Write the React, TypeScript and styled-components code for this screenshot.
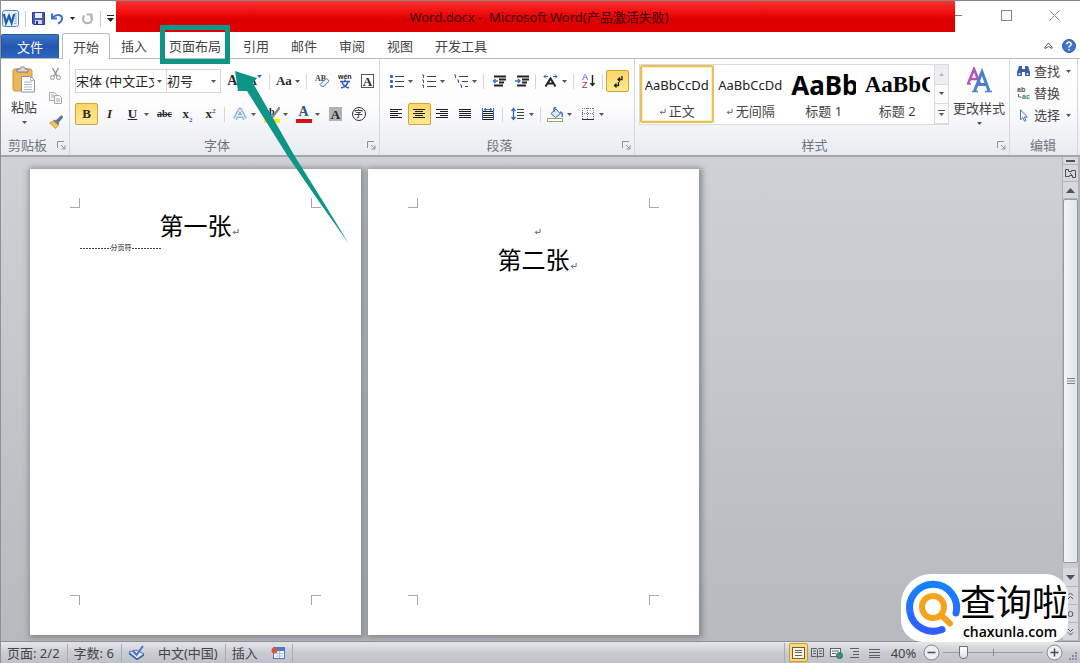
import React, { useState } from "react";
import styled, { createGlobalStyle, css } from "styled-components";

const sans = '"Noto Sans", "Noto Sans CJK SC", sans-serif';
const serif = '"Liberation Serif", "Noto Sans CJK SC", serif';
const teal = "#0f9488";

const GlobalStyle = createGlobalStyle`
  * { box-sizing: border-box; }
  body { margin: 0; font-family: ${sans}; font-size: 13px; color: #444; background: #fff; }
  button, select, input { font: inherit; color: inherit; margin: 0; }
  button { border: 0; padding: 0; background: none; }
  svg { display: block; flex: none; }
`;

const Window = styled.div`
  display: flex;
  flex-direction: column;
  min-height: 100vh;
  border-left: 1px solid #8d9197;
  background: #fff;
`;

/* ---------- title bar ---------- */

const TitleBar = styled.header`
  display: flex;
  height: 33px;
  border-top: 1px solid #8c8585;
`;

const QuickAccess = styled.div`
  display: flex;
  align-items: center;
  gap: 6px;
  width: 115px;
  padding: 3px 0 0 1px;
`;

const QuickButton = styled.button`
  display: flex;
  align-items: center;
  gap: 6px;
`;

const QuickDivider = styled.span`
  width: 1px;
  height: 16px;
  background: #c9cbcf;
`;

const Banner = styled.h1`
  flex: 1;
  height: 31px;
  margin: 0;
  padding-left: 7px;
  line-height: 32px;
  font-size: 13px;
  font-weight: 400;
  text-align: center;
  white-space: pre;
  color: #3d0505;
  background: linear-gradient(#f93030, #ee0808 45%, #dc0000 60%, #e00000);
`;

const WindowControls = styled.div`
  display: flex;
  justify-content: space-between;
  width: 125px;
  padding: 9px 20px 0 0;
  align-items: flex-start;
`;

/* ---------- tabs ---------- */

const TabBar = styled.nav`
  display: flex;
  height: 26px;
  border-bottom: 1px solid #b9bcc1;
`;

const FileTab = styled.button`
  width: 58px;
  margin-right: 3px;
  margin-top: 1px;
  line-height: 20px;
  color: #fff;
  border-radius: 2px 2px 0 0;
  border: 1px solid #2455a0;
  border-bottom: 0;
  background: linear-gradient(#3c74c8, #2358b0 50%, #2d66bf);
`;

const Tab = styled.button<{ $active?: boolean }>`
  position: relative;
  padding: 0 11px;
  line-height: 24px;
  white-space: nowrap;
  ${(p) =>
    p.$active &&
    css`
      height: 26px;
      padding: 0 10px;
      line-height: 22px;
      border: 1px solid #b9bcc1;
      border-bottom: 0;
      border-radius: 3px 3px 0 0;
      background: #fff;
    `}
`;

const TabTools = styled.div`
  display: flex;
  align-items: center;
  gap: 9px;
  margin-left: auto;
  padding-right: 4px;
`;

const Highlight = styled.span`
  position: absolute;
  z-index: 2;
  inset: -8px 2px -6px 2px;
  border: 5px solid ${teal};
`;

const Pointer = styled.svg`
  position: absolute;
  z-index: 3;
  left: 75px;
  top: 38px;
  pointer-events: none;
`;

/* ---------- ribbon ---------- */

const Ribbon = styled.div`
  display: flex;
  height: 98px;
  padding-right: 2px;
  border-bottom: 2px solid #a3a6ab;
  background: linear-gradient(#fff, #fcfcfd 50%, #e7eaef);
`;

const Group = styled.section<{ $width?: number }>`
  display: flex;
  flex-direction: column;
  ${(p) => (p.$width ? css`width: ${p.$width}px; flex: none;` : css`flex: 1;`)}
  border-right: 1px solid #d5d7db;
`;

const GroupRows = styled.div`
  display: flex;
  flex-direction: column;
  flex: 1;
  gap: 9px;
  padding: 10px 0 0 5px;
`;

const GroupPanel = styled.div`
  display: flex;
  flex: 1;
  padding: 5px 0 0 4px;
`;

const ToolRow = styled.div`
  display: flex;
  align-items: center;
  height: 24px;
`;

const GroupLabel = styled.footer`
  display: flex;
  align-items: center;
  height: 20px;
  padding-right: 1px;
  color: #70747c;
  line-height: 18px;

  span { flex: 1; text-align: center; }
`;

const Launcher = styled.button`
  width: 14px;
  height: 14px;
  display: grid;
  place-items: center;
`;

const Tool = styled.button<{ $on?: boolean; $split?: boolean }>`
  display: flex;
  align-items: center;
  width: ${(p) => (p.$split ? 32 : 23)}px;
  height: 22px;
  padding-right: ${(p) => (p.$split ? 4 : 0)}px;
  border-radius: 2px;
  ${(p) =>
    p.$on &&
    css`
      border: 1px solid #d2a23b;
      background: linear-gradient(#fbd568, #ffe07a 50%, #ffe995);
    `}
`;

const ToolFace = styled.span`
  display: flex;
  justify-content: center;
  align-items: center;
  flex: 1;
`;

const Divider = styled.span`
  width: 1px;
  height: 15px;
  margin: 0 3px 0 2px;
  background: #d4d6da;
`;

const Letter = styled.span<{ $size?: number; $italic?: boolean; $line?: string; $color?: string }>`
  font-family: ${serif};
  font-weight: 700;
  font-size: ${(p) => p.$size ?? 13}px;
  line-height: 16px;
  font-style: ${(p) => (p.$italic ? "italic" : "normal")};
  text-decoration: ${(p) => p.$line ?? "none"};
  color: ${(p) => p.$color ?? "#2b2b2b"};

  sub, sup { font-size: 7px; line-height: 0; color: #2a5fb0; }
`;

const BoxedLetter = styled(Letter)<{ $fill?: string }>`
  width: 13px;
  height: 14px;
  line-height: 13px;
  text-align: center;
  background: ${(p) => p.$fill ?? "#fff"};
  border: 1px solid ${(p) => p.$fill ?? "#555"};
`;

const RingLetter = styled.span`
  width: 14px;
  height: 14px;
  border: 1px solid #333;
  border-radius: 50%;
  font-size: 9px;
  line-height: 11px;
  text-align: center;
  color: #222;
`;

const Underbar = styled.span<{ $color: string }>`
  display: grid;
  justify-items: center;
  width: 16px;
  height: 17px;
  border-bottom: 4px solid ${(p) => p.$color};
  line-height: 12px;

  ${Letter} { line-height: 12px; }
`;

const Combo = styled.label<{ $width: number }>`
  display: flex;
  align-items: center;
  width: ${(p) => p.$width}px;
  height: 24px;
  padding-right: 4px;
  border: 1px solid #d4d6da;
  background: #fff;

  & + & { border-left: 0; }

  select {
    flex: 1;
    min-width: 0;
    height: 20px;
    margin-right: 3px;
    padding: 0;
    border: 0;
    appearance: none;
    background: none;
    color: #222;
    overflow: hidden;
    text-overflow: clip;
  }
`;

const PasteButton = styled.button`
  display: flex;
  flex-direction: column;
  align-items: center;
  width: 38px;
  padding-top: 2px;
  line-height: 18px;
  gap: 5px;
`;

const SmallColumn = styled.div`
  display: flex;
  flex-direction: column;
  gap: 10px;
  padding: 3px 0 0 6px;
`;

const Gallery = styled.div`
  display: flex;
  flex: 1;
  height: 61px;
  border: 1px solid #d9dbdf;
  background: #fff;
`;

const StyleCard = styled.button<{ $on?: boolean }>`
  display: flex;
  flex-direction: column;
  align-items: center;
  flex: 1;
  min-width: 0;
  height: 58px;
  padding-top: 1px;
  border: 2px solid transparent;
  border-radius: 2px;
  ${(p) => p.$on && css`border-color: #e9c05a; box-shadow: inset 0 0 0 1px #fff0b5;`}
`;

const Sample = styled.span<{ $size: number; $face?: string; $bold?: boolean }>`
  display: block;
  max-width: 65px;
  height: 34px;
  line-height: 34px;
  overflow: hidden;
  white-space: nowrap;
  font-family: ${(p) => p.$face ?? sans};
  font-size: ${(p) => p.$size}px;
  font-weight: ${(p) => (p.$bold ? 700 : 400)};
  color: ${(p) => (p.$bold ? "#000" : "#222")};
`;

const StyleName = styled.span`
  display: flex;
  align-items: center;
  gap: 3px;
  line-height: 18px;
  white-space: nowrap;
`;

const GalleryScroll = styled.div`
  display: grid;
  grid-template-rows: repeat(3, 1fr);
  width: 14px;

  button {
    display: grid;
    place-items: center;
    border-left: 1px solid #d9dbdf;
    border-bottom: 1px solid #d9dbdf;
    background: #fbfbfc;
  }
  button:first-child { background: #eceef1; }
`;

const ChangeStyles = styled.button`
  display: flex;
  flex-direction: column;
  align-items: center;
  gap: 5px;
  width: 60px;
  padding-top: 3px;
  line-height: 18px;
  white-space: nowrap;
`;

const EditList = styled.div`
  display: flex;
  flex-direction: column;
  flex: 1;
  padding: 1px 6px 0 7px;
`;

const EditButton = styled.button`
  display: flex;
  align-items: center;
  gap: 4px;
  height: 22px;
  line-height: 18px;

  span { flex: 1; text-align: left; }
`;

/* ---------- workspace ---------- */

const Workspace = styled.main`
  position: relative;
  display: flex;
  flex: 1;
  background: linear-gradient(#ced1d5, #b6babf);
`;

const Pages = styled.div`
  display: flex;
  flex: 1;
  gap: 7px;
  padding: 12px 0 6px 29px;
`;

const Paper = styled.article`
  display: flex;
  flex-direction: column;
  width: 331px;
  padding: 29px 40px 30px;
  background: #fff;
  box-shadow: 1px 1px 6px 2px #85898f;
`;

const MarkRow = styled.div`
  display: flex;
  justify-content: space-between;
`;

const CornerMark = styled.span<{ $v: "top" | "bottom"; $h: "left" | "right" }>`
  width: 10px;
  height: 10px;
  border: 0 solid #a9a9a9;
  border-${(p) => p.$v}-width: 1px;
  border-${(p) => p.$h}-width: 1px;
`;

const PaperBody = styled.div`
  flex: 1;
  padding: 2px 10px 0;
`;

const Line = styled.p`
  display: flex;
  justify-content: center;
  align-items: center;
  height: 34px;
  margin: 0;
  font-size: 24px;
  line-height: 34px;
  font-family: ${serif};
  color: #000;

  svg { margin: 8px -7px 0 0; }
`;

const PageBreak = styled.p`
  display: flex;
  align-items: center;
  width: 82px;
  height: 8px;
  margin: 0;
  font-size: 7px;
  line-height: 8px;
  color: #111;
  white-space: nowrap;

  &::before, &::after {
    content: "";
    flex: 1;
    height: 1px;
    background: repeating-linear-gradient(90deg, #444 0 2px, #fff 2px 3px);
  }
`;

const ScrollColumn = styled.div`
  display: flex;
  flex-direction: column;
  width: 18px;
  border-right: 2px solid #b0b3b8;
  border-left: 1px solid #b3b7bd;
  background: #c9ccd2;
`;

const ScrollButton = styled.button<{ $height: number }>`
  display: grid;
  place-items: center;
  height: ${(p) => p.$height}px;
  border-bottom: 1px solid #b3b7bd;
  background: #d5d8dd;
`;

const ScrollThumb = styled.div`
  display: grid;
  place-items: center;
  flex: 1;
  margin-bottom: 5px;
  border: 1px solid #9599a0;
  border-radius: 2px;
  background: linear-gradient(90deg, #f4f6fa, #dfe3ec);
`;

const Watermark = styled.aside`
  position: absolute;
  z-index: 4;
  right: 12px;
  bottom: -1px;
  display: flex;
  align-items: center;
  width: 167px;
  height: 68px;
  padding-left: 4px;
  border-radius: 30px 22px 18px 22px;
  background: #fff;
  color: #000;

  div { display: flex; flex-direction: column; align-items: center; padding-top: 5px; margin-left: -1px; }
  strong { font-size: 36px; line-height: 43px; font-weight: 400; white-space: nowrap; }
  span { font: 600 14px/16px "Open Sans", sans-serif; margin-right: 8px; }
`;

/* ---------- status bar ---------- */

const StatusBar = styled.footer`
  display: flex;
  align-items: center;
  height: 22px;
  padding-right: 1px;
  border-top: 1px solid #8f9398;
  background: linear-gradient(#e6e8ec, #c9ccd2 50%, #bfc2c8);
`;

const StatusItem = styled.button`
  display: flex;
  align-items: center;
  gap: 13px;
  height: 18px;
  padding: 0 7px 0 6px;
  border-right: 1px solid #a9adb3;
  line-height: 16px;
  white-space: nowrap;
`;

const ViewButtons = styled.div`
  display: flex;
  margin-left: auto;
  padding-left: 4px;
  border-left: 1px solid #a9adb3;
`;

const ViewButton = styled.button<{ $on?: boolean }>`
  display: grid;
  place-items: center;
  width: 19px;
  height: 19px;
  ${(p) => p.$on && css`border: 1px solid #c99a32; border-radius: 2px; background: #ffdc73;`}
`;

const ZoomValue = styled.button`
  width: 39px;
  line-height: 16px;
`;

const Zoom = styled.input`
  width: 100px;
  height: 18px;
  margin: 0 3px;
  appearance: none;
  background:
    linear-gradient(#8a8e94, #8a8e94) center / 1px 7px no-repeat,
    linear-gradient(#9a9ea4, #9a9ea4) center / 100% 1px no-repeat;

  &::-webkit-slider-thumb {
    appearance: none;
    width: 9px;
    height: 13px;
    border: 1px solid #6f7378;
    border-radius: 1px 1px 5px 5px;
    background: linear-gradient(#fff, #dfe1e5);
  }
`;

/* ---------- drawings ---------- */

const Down = ({ color = "#555" }: { color?: string }) => (
  <svg width="5" height="3" viewBox="0 0 5 3"><path d="M0 0h5L2.500 3z" fill={color} /></svg>
);

const Return = ({ size = 7, color = "#555" }: { size?: number; color?: string }) => (
  <svg width={size} height={size} viewBox="0 0 8 8" fill="none" stroke={color}>
    <path d="M7 1v4H1.500M3.500 3l-2 2 2 2" />
  </svg>
);

const DialogMark = () => (
  <svg width="9" height="9" viewBox="0 0 9 9" fill="none" stroke="#8c9096">
    <path d="M.5 7V.5H7M4 4l3.500 3.500M8 4.500V8H4.500" />
  </svg>
);

const WordIcon = () => (
  <svg width="17" height="17" viewBox="0 0 17 17">
    <rect x=".5" y=".5" width="16" height="16" rx="2" fill="#e6f1fc" stroke="#5287c6" />
    <path d="M12.500 3.500h2M12.500 6h2M12.500 8.500h2M12.500 11h2M12.500 13.500h2" stroke="#6f9fd8" />
    <path d="M1.800 4l2.200 9L7 6l2.600 7L12.200 4" fill="none" stroke="#1f5bb0" strokeWidth="2.200" />
  </svg>
);

const SaveIcon = () => (
  <svg width="13" height="13" viewBox="0 0 13 13">
    <path d="M.5.500h12v12h-11l-1-1z" fill="#4a55b5" stroke="#2f3a94" />
    <rect x="3" y="1" width="7" height="5" fill="#e9eefb" />
    <rect x="3" y="8" width="7" height="4" fill="#cdd4ee" /><rect x="4" y="9" width="2" height="3" fill="#2b3480" />
  </svg>
);

const UndoIcon = () => (
  <svg width="13" height="13" viewBox="0 0 13 13" fill="none" stroke="#3c73c4" strokeWidth="2">
    <path d="M2 5.500C5 2 11 2 11 6.500c0 2.500-2 4-4 5" /><path d="M1 1.500v5h5" />
  </svg>
);

const RedoIcon = () => (
  <svg width="13" height="13" viewBox="0 0 13 13" fill="none" stroke="#b0b3b7" strokeWidth="2">
    <path d="M9.500 3.500a4.500 4.500 0 1 1-6 0" /><path d="M5.500 2.500h5v4" />
  </svg>
);

const PasteIcon = () => (
  <svg width="24" height="27" viewBox="0 0 24 27">
    <rect x="1" y="3" width="19" height="22" rx="2" fill="#efb654" stroke="#d0913a" />
    <path d="M5 6V3h3c0-3 5-3 5 0h3v3z" fill="#d9dade" stroke="#77797e" />
    <path d="M9.500 10.500h9l4 4v11.500h-13z" fill="#fff" stroke="#8794ab" />
    <path d="M18.500 10.500v4h4M12 16h8M12 18.500h8M12 21h8M12 23.500h8" fill="none" stroke="#a9bbd6" />
  </svg>
);

const CutIcon = () => (
  <svg width="13" height="14" viewBox="0 0 13 14" fill="none" stroke="#8f9399">
    <path d="M3.500 1l4.500 8M9.500 1L5 9" strokeWidth="1.400" />
    <circle cx="3.500" cy="10.500" r="2" /><circle cx="9.500" cy="10.500" r="2" />
  </svg>
);

const CopyIcon = () => (
  <svg width="13" height="14" viewBox="0 0 13 14" fill="#fafafa" stroke="#a5a8ad">
    <path d="M.5 1.500h5l2 2v6h-7z" /><path d="M5.500 4.500h5l2 2v6h-7z" /><path d="M7 8h4M7 10h4M2 4h3M2 6h3" />
  </svg>
);

const BrushIcon = () => (
  <svg width="14" height="14" viewBox="0 0 14 14">
    <path d="M12.500.500L14 2 9.500 7.500 7 5.500z" fill="#5a6fa8" stroke="#48527a" strokeWidth=".5" />
    <path d="M5.500 4.500l5 4-1 1.500-5.500-4z" fill="#777" />
    <path d="M4 6l5.500 4-3 3.500L.5 8z" fill="#edc45d" stroke="#b98b2c" strokeWidth=".7" />
  </svg>
);

const EraserIcon = () => (
  <svg width="16" height="16" viewBox="0 0 16 16">
    <text x="1" y="8" fontSize="8" fontWeight="700" fontFamily="Liberation Serif" fill="#444">AB</text>
    <path d="M6 11.500l5-5c1-1 2-1 3 0s.8 2 0 2.800l-4 4H7.500z" fill="#edf2fb" stroke="#5272ac" />
  </svg>
);

const PhoneticIcon = () => (
  <svg width="16" height="16" viewBox="0 0 16 16">
    <text x="1" y="6" fontSize="7" fontWeight="700" fontFamily="Liberation Sans" fill="#222">wén</text>
    <path d="M3 8.500h10M8 6.500v2M5 9c1 3 3 5 7 6M11 9c-1 3-3 5-7 6" fill="none" stroke="#2f5fb3" strokeWidth="1.500" />
  </svg>
);

const OutlineA = () => (
  <svg width="14" height="14" viewBox="0 0 14 14" fill="none" strokeLinejoin="round">
    <path d="M2 12L7 2.500 12 12M4.500 9h5" stroke="#84b4e3" strokeWidth="4" />
    <path d="M2 12L7 2.500 12 12M4.500 9h5" stroke="#e3f0fc" strokeWidth="1.500" />
  </svg>
);

const PenMark = () => (
  <svg width="16" height="13" viewBox="0 0 16 13">
    <text x="0" y="9" fontSize="10" fontWeight="700" fontFamily="Liberation Serif" fill="#222">ab</text>
    <path d="M15 1L8.500 10l-1 2 2-1L16 2.500z" fill="#999" stroke="#555" strokeWidth=".6" />
  </svg>
);

type ListKind = "bullet" | "number" | "level";
const ListIcon = ({ kind }: { kind: ListKind }) => (
  <svg width="14" height="14" viewBox="0 0 14 14">
    {[0, 1, 2].map((i) => {
      const shift = kind === "level" ? i * 3 : 0;
      return (
        <g key={i}>
          <rect x={5 + shift} y={2 + i * 5} width={9 - shift} height="1" fill="#444" />
          {kind === "bullet" ? (
            <rect x="0" y={1 + i * 5} width="3" height="3" rx="1" fill="#3464ad" />
          ) : (
            <path d={`M${shift} ${1 + i * 5}h1.500v3`} fill="none" stroke="#3464ad" />
          )}
        </g>
      );
    })}
  </svg>
);

const IndentIcon = ({ out }: { out?: boolean }) => (
  <svg width="14" height="13" viewBox="0 0 14 13">
    <path d="M2 1.500h12M7 4.500h7M7 7.500h5M2 10.500h9" stroke="#222" strokeWidth="2" />
    <path d={out ? "M6 6H1.500M3.500 4l-2 2 2 2" : "M0 6h4.500M3 4l2 2-2 2"} stroke="#3b70c0" fill="none" strokeWidth="1.400" />
  </svg>
);

type AlignKind = "left" | "center" | "right" | "full" | "spread";
const AlignIcon = ({ kind }: { kind: AlignKind }) => {
  const rows = kind === "spread" ? [3, 5, 7, 9, 11] : [1, 3, 5, 7, 9];
  return (
    <svg width="13" height="12" viewBox="0 0 13 12">
      {rows.map((y, i) => {
        const w = kind === "full" || kind === "spread" || i % 2 === 0 ? 12 : 8;
        const x = kind === "right" ? 12 - w : kind === "center" ? (12 - w) / 2 : 0;
        return <rect key={y} x={x} y={y} width={w} height="1" fill="#1d1d1d" />;
      })}
      {kind === "spread" && <path d="M.5 0v12M11.500 0v12M2 1.500h8M4 0L2 1.500 4 3M8 0l2 1.500L8 3" fill="none" stroke="#3668b5" />}
    </svg>
  );
};

const ScaleIcon = () => (
  <svg width="15" height="14" viewBox="0 0 15 14" fill="none">
    <path d="M2.500 12.500l5-8 5 8M4.500 9.500h6" stroke="#222" strokeWidth="2" />
    <path d="M1 2.500h4M10 2.500h4M3 .5l-2 2 2 2M12 .5l2 2-2 2" stroke="#2f62b3" />
  </svg>
);

const SortIcon = () => (
  <svg width="14" height="16" viewBox="0 0 14 16">
    <text x="0" y="7" fontSize="9" fontFamily="Liberation Sans" fill="#2f62b3">A</text>
    <text x="0" y="15" fontSize="9" fontFamily="Liberation Sans" fill="#a13c4c">Z</text>
    <path d="M10.500 2v10M8.500 10l2 2.500 2-2.500" fill="none" stroke="#222" strokeWidth="1.400" />
  </svg>
);

const MarksIcon = () => (
  <svg width="14" height="14" viewBox="0 0 14 14" fill="none" stroke="#222" strokeWidth="1.300">
    <path d="M11 2v3.500H7M9 3.500l-2 2 2 2M7.500 8v3.500h-4M5.500 9.500l-2 2 2 2" />
  </svg>
);

const SpacingIcon = () => (
  <svg width="13" height="14" viewBox="0 0 13 14" fill="none">
    <path d="M6 2.500h7M6 5.500h7M6 8.500h7M6 11.500h7" stroke="#444" />
    <path d="M2.500 1.500v11M.5 4l2-2.500 2 2.500M.5 10l2 2.500 2-2.500" stroke="#3568b5" strokeWidth="1.300" />
  </svg>
);

const BucketIcon = () => (
  <svg width="17" height="15" viewBox="0 0 17 15">
    <path d="M4 6.500L9 2l4.500 5-5 3.500z" fill="#dbe8f8" stroke="#3f659f" />
    <path d="M7 5V1.500c0-1 2-1 2 0M13 5c2 0 3 2 2 5" fill="none" stroke="#3b6fc0" strokeWidth="1.400" />
    <rect x=".5" y="11.500" width="15" height="3" fill="#fff" stroke="#9aa36b" />
  </svg>
);

const BorderIcon = () => (
  <svg width="12" height="12" viewBox="0 0 12 12" fill="none" stroke="#777">
    <path d="M.5 0v11M11.500 0v11M5.500 0v11M0 .5h12M0 5.500h12" strokeDasharray="1 1" /><path d="M0 11.500h12" stroke="#333" />
  </svg>
);

const StylesIcon = () => (
  <svg width="26" height="27" viewBox="0 0 26 27" fill="none">
    <path d="M2 17L8 2l6 15M4.500 12h7" stroke="#b557b5" strokeWidth="2.600" />
    <path d="M1 17h4M11 17h4" stroke="#b557b5" strokeWidth="1.500" />
    <path d="M8.500 24L16 5l7 19M11.500 17.500h9" stroke="#4a80cc" strokeWidth="3" />
    <path d="M6 24.500h6M19 24.500h7" stroke="#4a80cc" strokeWidth="1.500" />
  </svg>
);

const FindIcon = () => (
  <svg width="13" height="12" viewBox="0 0 13 12" fill="#3d5f9e">
    <path d="M2 1h3v3h3V1h3l2 6v4H8V7H5v4H0V7z" /><path d="M1.500 8h2v2h-2zM9.500 8h2v2h-2z" fill="#bfd0ee" />
  </svg>
);

const ReplaceIcon = () => (
  <svg width="13" height="14" viewBox="0 0 13 14" fontFamily="Liberation Sans" fontSize="7" fontWeight="700">
    <text x="0" y="6" fill="#555">ab</text><text x="5" y="13" fill="#2f8a4d">ac</text>
    <path d="M1.500 8v3h3" fill="none" stroke="#3568b5" />
  </svg>
);

const SelectIcon = () => (
  <svg width="13" height="13" viewBox="0 0 13 13">
    <path d="M3.500.800v10l2.300-2.300 1.700 3.700 1.500-.7L7.300 8h3z" fill="#fff" stroke="#5272ac" />
  </svg>
);

const HelpIcon = () => (
  <svg width="14" height="14" viewBox="0 0 14 14">
    <circle cx="7" cy="7" r="6.500" fill="#3f74cc" stroke="#2b579f" />
    <path d="M4.800 5.300c0-3 4.600-2.800 4.400 0C9.100 6.800 7 6.800 7 8.500M7 10v1.500" fill="none" stroke="#fff" strokeWidth="1.500" />
  </svg>
);

const ProofIcon = () => (
  <svg width="17" height="15" viewBox="0 0 17 15">
    <path d="M1 7l7-2 8 4-7 5z" fill="#dfe7f5" stroke="#4e6fb0" /><path d="M1 8.500l8 6 7-4.500" fill="none" stroke="#3b61a8" strokeWidth="1.400" />
    <path d="M5 6l3.500 4L15 1" fill="none" stroke="#4a74c8" strokeWidth="2" />
  </svg>
);

const MacroIcon = () => (
  <svg width="14" height="12" viewBox="0 0 14 12">
    <rect x="2.500" y=".5" width="11" height="11" fill="#eef4fd" stroke="#5678b3" /><rect x="3" y="1" width="10" height="3" fill="#4a7cc9" />
    <path d="M5 6.500h7M5 9h7M8.500 4v7" stroke="#a9bfe0" /><circle cx="3.500" cy="3.500" r="3" fill="#d9553a" />
  </svg>
);

type ViewKind = "print" | "read" | "web" | "outline" | "draft";
const ViewIcon = ({ kind }: { kind: ViewKind }) => (
  <svg width="13" height="12" viewBox="0 0 13 12" fill="none" stroke="#5d6167">
    {kind === "print" && <><rect x=".5" y=".5" width="12" height="11" fill="#fff8dc" /><path d="M3 3.500h7M3 5.500h7M3 8.500h7" /></>}
    {kind === "read" && <path d="M.5 1.500h5l1 1 1-1h5v8h-5l-1 1-1-1h-5zM6.500 2.500v8M2 4h3M2 6.500h3M8 4h3M8 6.500h3" />}
    {kind === "web" && <><rect x=".5" y="1.500" width="10" height="8" fill="#f4f6f8" /><path d="M2 4h7M2 6.500h4" /><circle cx="9.500" cy="8.500" r="3" fill="#3f8d7c" stroke="#2f6e78" /></>}
    {kind === "outline" && <path d="M1 1.500h9M4 4.500h6M4 7.500h6M1 10.500h9" />}
    {kind === "draft" && <path d="M1 2.500h11M1 5.500h11M1 8.500h11M1 10.500h11" />}
  </svg>
);

const RoundSign = ({ plus }: { plus?: boolean }) => (
  <svg width="17" height="17" viewBox="0 0 17 17">
    <circle cx="8.500" cy="8.500" r="7.500" fill="#eceef1" stroke="#83878d" />
    <path d={plus ? "M4.500 8.500h8M8.500 4.500v8" : "M4.500 8.500h8"} stroke="#4b4f55" strokeWidth="1.500" />
  </svg>
);

const Triangle = ({ flip }: { flip?: boolean }) => (
  <svg width="9" height="5" viewBox="0 0 9 5"><path d={flip ? "M0 0h9L4.500 5z" : "M0 5h9L4.500 0z"} fill="#4d5258" /></svg>
);

const JumpIcon = ({ kind }: { kind: "prev" | "dot" | "next" }) => (
  <svg width="7" height="8" viewBox="0 0 7 8" fill="none" stroke="#4d5258">
    {kind === "prev" && <path d="M1 3.500L3.500 1 6 3.500M1 7l2.500-2.500L6 7" />}
    {kind === "dot" && <circle cx="3.500" cy="4" r="2.500" />}
    {kind === "next" && <path d="M1 1l2.500 2.500L6 1M1 4.500L3.500 7 6 4.500" />}
  </svg>
);

const LogoIcon = () => (
  <svg width="56" height="58" viewBox="0 0 56 58" fill="none" strokeLinecap="round">
    <defs>
      <linearGradient id="ring" x1="0" y1="0" x2="0" y2="1">
        <stop offset="0" stopColor="#1583ff" /><stop offset="1" stopColor="#2f5dff" />
      </linearGradient>
    </defs>
    <path d="M37 50.500A23.500 23.500 0 1 1 51 34" stroke="url(#ring)" strokeWidth="7" />
    <circle cx="28" cy="28" r="11" stroke="#f5a21d" strokeWidth="6" />
    <path d="M37 37l8 7.500" stroke="#f5a21d" strokeWidth="6" />
  </svg>
);

/* ---------- composed parts ---------- */

type ToolButtonProps = { label: string; on?: boolean; split?: boolean; children: React.ReactNode };
const ToolButton = ({ label, on, split, children }: ToolButtonProps) => (
  <Tool aria-label={label} $on={on} $split={split}>
    <ToolFace>{children}</ToolFace>
    {split && <Down />}
  </Tool>
);

const Footer = ({ title, launcher = true }: { title: string; launcher?: boolean }) => (
  <GroupLabel>
    <span>{title}</span>
    {launcher && <Launcher aria-label={`${title}对话框`}><DialogMark /></Launcher>}
  </GroupLabel>
);

const Marks = ({ edge }: { edge: "top" | "bottom" }) => {
  const side = edge === "top" ? "bottom" : "top";
  return (
    <MarkRow>
      <CornerMark $v={side} $h="right" />
      <CornerMark $v={side} $h="left" />
    </MarkRow>
  );
};

const tabsAfter = ["引用", "邮件", "审阅", "视图", "开发工具"];
const views: ViewKind[] = ["print", "read", "web", "outline", "draft"];
const aligns: AlignKind[] = ["left", "center", "right", "full", "spread"];

export default function App() {
  const [zoom, setZoom] = useState(18);

  return (
    <Window>
      <GlobalStyle />
      <TitleBar>
        <QuickAccess>
          <WordIcon />
          <QuickDivider />
          <QuickButton aria-label="保存"><SaveIcon /></QuickButton>
          <QuickButton aria-label="撤消"><UndoIcon /><Down color="#222" /></QuickButton>
          <QuickButton aria-label="重复"><RedoIcon /></QuickButton>
          <QuickDivider />
          <QuickButton aria-label="自定义">
            <svg width="7" height="7" viewBox="0 0 7 7"><path d="M0 .5h7" stroke="#222" /><path d="M0 3h7L3.500 7z" fill="#222" /></svg>
          </QuickButton>
        </QuickAccess>
        <Banner>{"Word.docx -  Microsoft Word(产品激活失败)"}</Banner>
        <WindowControls>
          <button aria-label="最小化"><svg width="8" height="11" viewBox="0 0 8 11"><path d="M0 5.500h7" stroke="#777" /></svg></button>
          <button aria-label="最大化"><svg width="11" height="11" viewBox="0 0 11 11"><rect x=".5" y=".5" width="10" height="10" fill="none" stroke="#888" /></svg></button>
          <button aria-label="关闭"><svg width="11" height="11" viewBox="0 0 11 11"><path d="M.5.500l10 10M10.500.500l-10 10" stroke="#888" /></svg></button>
        </WindowControls>
      </TitleBar>

      <TabBar>
        <FileTab>文件</FileTab>
        <Tab $active>开始</Tab>
        <Tab>插入</Tab>
        <Tab>
          页面布局
          <Highlight />
          <Pointer width="118" height="176" viewBox="0 0 118 176">
            <path d="M2 0L24 7l-4 5 41 72 30 48 25 41-29-41-33-48-40-64-9 0z" fill={teal} />
          </Pointer>
        </Tab>
        {tabsAfter.map((t) => <Tab key={t}>{t}</Tab>)}
        <TabTools>
          <button aria-label="折叠功能区">
            <svg width="9" height="7" viewBox="0 0 9 7"><path d="M1 5l3.500-4L8 5v1.500L4.500 4.500 1 6.500z" fill="#fff" stroke="#555" /></svg>
          </button>
          <button aria-label="帮助"><HelpIcon /></button>
        </TabTools>
      </TabBar>

      <Ribbon>
        <Group $width={69}>
          <GroupPanel>
            <PasteButton><PasteIcon />粘贴<Down /></PasteButton>
            <SmallColumn>
              <button aria-label="剪切"><CutIcon /></button>
              <button aria-label="复制"><CopyIcon /></button>
              <button aria-label="格式刷"><BrushIcon /></button>
            </SmallColumn>
          </GroupPanel>
          <Footer title="剪贴板" />
        </Group>

        <Group $width={310}>
          <GroupRows>
            <ToolRow>
              <Combo $width={92}>
                <select aria-label="字体"><option>宋体 (中文正文标题)</option></select>
                <Down />
              </Combo>
              <Combo $width={54}>
                <select aria-label="字号"><option>初号</option></select>
                <Down />
              </Combo>
              <ToolButton label="增大字体"><Letter $size={14}>A</Letter></ToolButton>
              <ToolButton label="缩小字体"><Letter $size={12}>A</Letter><svg width="5" height="12" viewBox="0 0 5 12"><path d="M0 0h5L2.500 3z" fill="#3464ad" /></svg></ToolButton>
              <Divider />
              <ToolButton label="更改大小写" split><Letter>Aa</Letter></ToolButton>
              <Divider />
              <ToolButton label="清除格式"><EraserIcon /></ToolButton>
              <ToolButton label="拼音指南"><PhoneticIcon /></ToolButton>
              <ToolButton label="字符边框"><BoxedLetter>A</BoxedLetter></ToolButton>
            </ToolRow>
            <ToolRow>
              <ToolButton label="加粗" on><Letter>B</Letter></ToolButton>
              <ToolButton label="倾斜"><Letter $italic>I</Letter></ToolButton>
              <ToolButton label="下划线" split><Letter $line="underline">U</Letter></ToolButton>
              <ToolButton label="删除线"><Letter $size={10} $line="line-through">abc</Letter></ToolButton>
              <ToolButton label="下标"><Letter>x<sub>2</sub></Letter></ToolButton>
              <ToolButton label="上标"><Letter>x<sup>2</sup></Letter></ToolButton>
              <Divider />
              <ToolButton label="文本效果" split><OutlineA /></ToolButton>
              <ToolButton label="突出显示" split><Underbar $color="#fff200"><PenMark /></Underbar></ToolButton>
              <ToolButton label="字体颜色" split><Underbar $color="#d3120f"><Letter $size={14} $color="#34527f">A</Letter></Underbar></ToolButton>
              <ToolButton label="字符底纹"><BoxedLetter $fill="#b3b3b3">A</BoxedLetter></ToolButton>
              <ToolButton label="带圈字符"><RingLetter>字</RingLetter></ToolButton>
            </ToolRow>
          </GroupRows>
          <Footer title="字体" />
        </Group>

        <Group $width={255}>
          <GroupRows>
            <ToolRow>
              <ToolButton label="项目符号" split><ListIcon kind="bullet" /></ToolButton>
              <ToolButton label="编号" split><ListIcon kind="number" /></ToolButton>
              <ToolButton label="多级列表" split><ListIcon kind="level" /></ToolButton>
              <Divider />
              <ToolButton label="减少缩进"><IndentIcon out /></ToolButton>
              <ToolButton label="增加缩进"><IndentIcon /></ToolButton>
              <Divider />
              <ToolButton label="中文版式" split><ScaleIcon /></ToolButton>
              <Divider />
              <ToolButton label="排序"><SortIcon /></ToolButton>
              <Divider />
              <ToolButton label="显示编辑标记" on><MarksIcon /></ToolButton>
            </ToolRow>
            <ToolRow>
              {aligns.map((a) => <ToolButton key={a} label={a} on={a === "center"}><AlignIcon kind={a} /></ToolButton>)}
              <Divider />
              <ToolButton label="行距" split><SpacingIcon /></ToolButton>
              <Divider />
              <ToolButton label="底纹" split><BucketIcon /></ToolButton>
              <ToolButton label="边框" split><BorderIcon /></ToolButton>
            </ToolRow>
          </GroupRows>
          <Footer title="段落" />
        </Group>

        <Group>
          <GroupPanel>
            <Gallery>
              <StyleCard $on><Sample $size={13}>AaBbCcDd</Sample><StyleName><Return />正文</StyleName></StyleCard>
              <StyleCard><Sample $size={13}>AaBbCcDd</Sample><StyleName><Return />无间隔</StyleName></StyleCard>
              <StyleCard><Sample $size={26} $bold>AaBb</Sample><StyleName>标题 1</StyleName></StyleCard>
              <StyleCard><Sample $size={23} $bold $face={serif}>AaBbC</Sample><StyleName>标题 2</StyleName></StyleCard>
              <GalleryScroll>
                <button aria-label="上一行"><svg width="5" height="3" viewBox="0 0 5 3"><path d="M0 3h5L2.500 0z" fill="#b5b8bd" /></svg></button>
                <button aria-label="下一行"><Down /></button>
                <button aria-label="其他"><svg width="7" height="7" viewBox="0 0 7 7"><path d="M0 .5h7" stroke="#555" /><path d="M1 3h5L3.500 6z" fill="#555" /></svg></button>
              </GalleryScroll>
            </Gallery>
            <ChangeStyles><StylesIcon />更改样式<Down /></ChangeStyles>
          </GroupPanel>
          <Footer title="样式" />
        </Group>

        <Group $width={68}>
          <EditList>
            <EditButton><FindIcon /><span>查找</span><Down /></EditButton>
            <EditButton><ReplaceIcon /><span>替换</span></EditButton>
            <EditButton><SelectIcon /><span>选择</span><Down /></EditButton>
          </EditList>
          <Footer title="编辑" launcher={false} />
        </Group>
      </Ribbon>

      <Workspace>
        <Pages>
          <Paper>
            <Marks edge="top" />
            <PaperBody>
              <Line>第一张<Return /></Line>
              <PageBreak>分页符</PageBreak>
            </PaperBody>
            <Marks edge="bottom" />
          </Paper>
          <Paper>
            <Marks edge="top" />
            <PaperBody>
              <Line><Return /></Line>
              <Line>第二张<Return /></Line>
            </PaperBody>
            <Marks edge="bottom" />
          </Paper>
        </Pages>
        <ScrollColumn>
          <ScrollButton $height={8} aria-label="拆分"><svg width="9" height="2" viewBox="0 0 9 2"><path d="M0 1h9" stroke="#4d5258" strokeWidth="2" /></svg></ScrollButton>
          <ScrollButton $height={17} aria-label="标尺">
            <svg width="11" height="11" viewBox="0 0 11 11" fill="none" stroke="#4d5258"><path d="M.5 1.500h3v2h3v-1h4v7h-3v-2h-3v1h-4zM5 5l2 2" /></svg>
          </ScrollButton>
          <ScrollButton $height={17} aria-label="向上滚动"><Triangle /></ScrollButton>
          <ScrollThumb><svg width="8" height="8" viewBox="0 0 8 8"><path d="M0 1.500h8M0 4h8M0 6.500h8" stroke="#7a7f86" /></svg></ScrollThumb>
          <ScrollButton $height={19} aria-label="向下滚动"><Triangle flip /></ScrollButton>
          <ScrollButton $height={18} aria-label="前一页"><JumpIcon kind="prev" /></ScrollButton>
          <ScrollButton $height={18} aria-label="选择浏览对象"><JumpIcon kind="dot" /></ScrollButton>
          <ScrollButton $height={18} aria-label="下一页"><JumpIcon kind="next" /></ScrollButton>
        </ScrollColumn>
        <Watermark>
          <LogoIcon />
          <div>
            <strong>查询啦</strong>
            <span>chaxunla.com</span>
          </div>
        </Watermark>
      </Workspace>

      <StatusBar>
        <StatusItem>页面: 2/2</StatusItem>
        <StatusItem>字数: 6</StatusItem>
        <StatusItem><ProofIcon />中文(中国)</StatusItem>
        <StatusItem>插入<MacroIcon /></StatusItem>
        <ViewButtons>
          {views.map((v) => <ViewButton key={v} $on={v === "print"} aria-label={v}><ViewIcon kind={v} /></ViewButton>)}
        </ViewButtons>
        <ZoomValue>40%</ZoomValue>
        <button aria-label="缩小"><RoundSign /></button>
        <Zoom type="range" aria-label="显示比例" value={zoom} onChange={(e) => setZoom(Number(e.target.value))} />
        <button aria-label="放大"><RoundSign plus /></button>
        <svg width="16" height="18" viewBox="0 0 16 18" fill="#8c9096"><path d="M12 8h2v2h-2zM9 11h2v2H9zM12 11h2v2h-2zM6 14h2v2H6zM9 14h2v2H9zM12 14h2v2h-2z" /></svg>
      </StatusBar>
    </Window>
  );
}
